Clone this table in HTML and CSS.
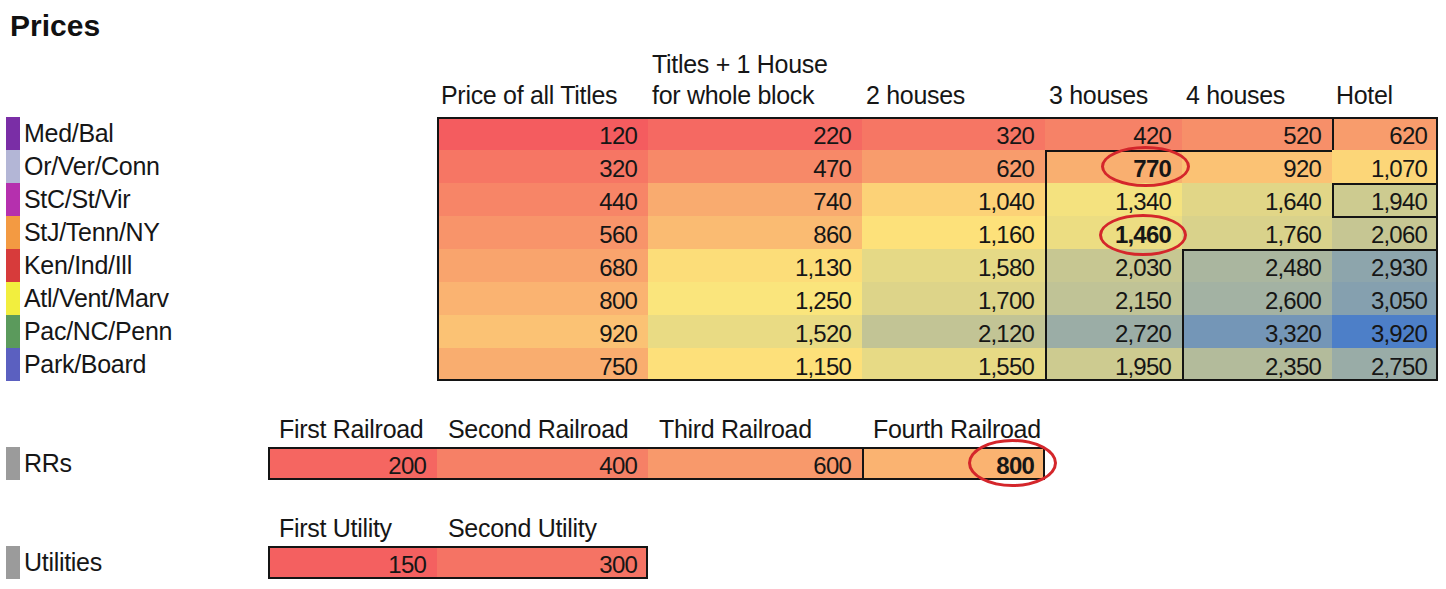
FILE: index.html
```html
<!DOCTYPE html>
<html lang="en">
<head>
<meta charset="utf-8">
<title>Prices</title>
<link rel="stylesheet" href="styles.css">
</head>
<body>
<div class="sheet">
  <h1 class="title">Prices</h1>

  <section class="section">
    <div class="side side-main">
      <ul class="labels">
        <li class="label"><span class="swatch sw-med"></span>Med/Bal</li>
        <li class="label"><span class="swatch sw-or"></span>Or/Ver/Conn</li>
        <li class="label"><span class="swatch sw-stc"></span>StC/St/Vir</li>
        <li class="label"><span class="swatch sw-stj"></span>StJ/Tenn/NY</li>
        <li class="label"><span class="swatch sw-ken"></span>Ken/Ind/Ill</li>
        <li class="label"><span class="swatch sw-atl"></span>Atl/Vent/Marv</li>
        <li class="label"><span class="swatch sw-pac"></span>Pac/NC/Penn</li>
        <li class="label"><span class="swatch sw-park"></span>Park/Board</li>
      </ul>
    </div>
    <div class="body">
      <div class="heads heads-main cols-main">
        <div class="h">Price of all Titles</div>
        <div class="h"><span>Titles + 1 House</span><span>for whole block</span></div>
        <div class="h">2 houses</div>
        <div class="h">3 houses</div>
        <div class="h">4 houses</div>
        <div class="h">Hotel</div>
      </div>
      <div class="grid cols-main">
        <div class="c lo" style="--p:0%">120</div>
        <div class="c lo" style="--p:9.2%">220</div>
        <div class="c lo" style="--p:18.4%">320</div>
        <div class="c lo" style="--p:27.6%">420</div>
        <div class="c lo" style="--p:36.9%">520</div>
        <div class="c lo l" style="--p:46.1%">620</div>

        <div class="c lo" style="--p:18.4%">320</div>
        <div class="c lo" style="--p:32.3%">470</div>
        <div class="c lo" style="--p:46.1%">620</div>
        <div class="c lo t l strong mark" style="--p:59.9%">770<span class="ring ring-770"></span></div>
        <div class="c lo t" style="--p:73.7%">920</div>
        <div class="c lo" style="--p:87.6%">1,070</div>

        <div class="c lo" style="--p:29.5%">440</div>
        <div class="c lo" style="--p:57.1%">740</div>
        <div class="c lo" style="--p:84.8%">1,040</div>
        <div class="c hi l" style="--p:5%">1,340</div>
        <div class="c hi" style="--p:16%">1,640</div>
        <div class="c hi t l" style="--p:27.1%">1,940</div>

        <div class="c lo" style="--p:40.6%">560</div>
        <div class="c lo" style="--p:68.2%">860</div>
        <div class="c lo" style="--p:95.9%">1,160</div>
        <div class="c hi l strong mark" style="--p:9.4%">1,460<span class="ring ring-1460"></span></div>
        <div class="c hi" style="--p:20.4%">1,760</div>
        <div class="c hi t" style="--p:31.5%">2,060</div>

        <div class="c lo" style="--p:51.6%">680</div>
        <div class="c lo" style="--p:93.1%">1,130</div>
        <div class="c hi" style="--p:13.8%">1,580</div>
        <div class="c hi l" style="--p:30.4%">2,030</div>
        <div class="c hi t l" style="--p:47%">2,480</div>
        <div class="c hi t" style="--p:63.5%">2,930</div>

        <div class="c lo" style="--p:62.7%">800</div>
        <div class="c hi" style="--p:1.7%">1,250</div>
        <div class="c hi" style="--p:18.2%">1,700</div>
        <div class="c hi l" style="--p:34.8%">2,150</div>
        <div class="c hi l" style="--p:51.4%">2,600</div>
        <div class="c hi" style="--p:68%">3,050</div>

        <div class="c lo" style="--p:73.7%">920</div>
        <div class="c hi" style="--p:11.6%">1,520</div>
        <div class="c hi" style="--p:33.7%">2,120</div>
        <div class="c hi l" style="--p:55.8%">2,720</div>
        <div class="c hi l" style="--p:77.9%">3,320</div>
        <div class="c hi" style="--p:100%">3,920</div>

        <div class="c lo" style="--p:58.1%">750</div>
        <div class="c lo" style="--p:94.9%">1,150</div>
        <div class="c hi" style="--p:12.7%">1,550</div>
        <div class="c hi l" style="--p:27.4%">1,950</div>
        <div class="c hi l" style="--p:42.2%">2,350</div>
        <div class="c hi" style="--p:56.9%">2,750</div>
      </div>
    </div>
  </section>

  <section class="section section-gap">
    <div class="side side-minor">
      <ul class="labels">
        <li class="label"><span class="swatch sw-gray"></span>RRs</li>
      </ul>
    </div>
    <div class="body">
      <div class="heads heads-minor cols-rr">
        <div class="h">First Railroad</div>
        <div class="h">Second Railroad</div>
        <div class="h">Third Railroad</div>
        <div class="h">Fourth Railroad</div>
      </div>
      <div class="grid cols-rr">
        <div class="c lo" style="--p:7.4%">200</div>
        <div class="c lo" style="--p:25.8%">400</div>
        <div class="c lo" style="--p:44.2%">600</div>
        <div class="c lo l strong mark" style="--p:62.7%">800<span class="ring ring-800"></span></div>
      </div>
    </div>
  </section>

  <section class="section section-gap">
    <div class="side side-minor">
      <ul class="labels">
        <li class="label"><span class="swatch sw-gray"></span>Utilities</li>
      </ul>
    </div>
    <div class="body">
      <div class="heads heads-minor cols-ut">
        <div class="h">First Utility</div>
        <div class="h">Second Utility</div>
      </div>
      <div class="grid cols-ut">
        <div class="c lo" style="--p:2.8%">150</div>
        <div class="c lo" style="--p:16.6%">300</div>
      </div>
    </div>
  </section>
</div>
</body>
</html>
```

FILE: styles.css
```css
:root {
  --ink: #161616;
  --line: #141414;
  --red: #f45c5f;
  --yel: #fde77b;
  --blu: #4d7fc8;
}

* {
  box-sizing: border-box;
}

html,
body {
  margin: 0;
  padding: 0;
  background: #ffffff;
}

body {
  font-family: "Liberation Sans", Arial, sans-serif;
  color: var(--ink);
  width: 1446px;
  height: 589px;
  overflow: hidden;
}

.title {
  margin: 0;
  height: 51px;
  padding-left: 10px;
  font-size: 30px;
  line-height: 51px;
  font-weight: 700;
  color: #111111;
}

.section {
  display: flex;
}

.section-gap {
  margin-top: 33px;
}

.side {
  flex: none;
}

.side-main {
  width: 437px;
  padding-top: 66px;
}

.side-minor {
  width: 268px;
  padding-top: 33px;
}

.labels {
  list-style: none;
  margin: 0;
  padding: 0;
}

.label {
  display: flex;
  height: 33px;
  font-size: 25px;
  letter-spacing: -0.3px;
  line-height: 33px;
  white-space: nowrap;
}

.swatch {
  flex: none;
  width: 14px;
  margin-left: 6px;
  margin-right: 4px;
}

.sw-med { background: #7a2ea6; }
.sw-or { background: #b3b6d6; }
.sw-stc { background: #b530ae; }
.sw-stj { background: #f39a42; }
.sw-ken { background: #d73b3b; }
.sw-atl { background: #f2ee3e; }
.sw-pac { background: #5b9a5c; }
.sw-park { background: #5b60c0; }
.sw-gray { background: #9b9b9b; }

.body {
  flex: none;
}

.cols-main {
  display: grid;
  width: 1001px;
  grid-template-columns: 211px 214px 183px 137px 150px 106px;
}

.cols-rr {
  display: grid;
  width: 777px;
  grid-template-columns: 169px 211px 214px 183px;
}

.cols-ut {
  display: grid;
  width: 380px;
  grid-template-columns: 169px 211px;
}

.h {
  font-size: 25px;
  letter-spacing: -0.3px;
  white-space: nowrap;
}

.heads-main .h {
  height: 66px;
  display: flex;
  flex-direction: column;
  justify-content: flex-end;
  padding: 0 0 6px 4px;
  line-height: 31px;
}

.heads-minor .h {
  height: 33px;
  padding-left: 11px;
  line-height: 30px;
}

.grid {
  position: relative;
  grid-auto-rows: 33px;
}

.grid::after {
  content: "";
  position: absolute;
  inset: 0;
  border: 2px solid var(--line);
  pointer-events: none;
}

.c {
  font-size: 24px;
  letter-spacing: -0.8px;
  line-height: 33px;
  padding: 1.5px 11px 0 0;
  text-align: right;
  white-space: nowrap;
  box-shadow: var(--t, 0 0 transparent), var(--l, 0 0 transparent);
}

.lo {
  background: color-mix(in srgb, var(--yel) var(--p), var(--red));
}

.hi {
  background: color-mix(in srgb, var(--blu) var(--p), var(--yel));
}

.t {
  --t: inset 0 2px var(--line);
}

.l {
  --l: inset 2px 0 var(--line);
}

.strong {
  font-weight: 700;
}

.mark {
  position: relative;
}

.ring {
  position: absolute;
  z-index: 1;
  border: 3px solid #d4262b;
  border-radius: 50%;
  pointer-events: none;
}

.ring-770 {
  left: 56px;
  top: -4px;
  width: 89px;
  height: 41px;
}

.ring-1460 {
  left: 54px;
  top: -2px;
  width: 88px;
  height: 42px;
}

.ring-800 {
  left: 106px;
  top: -8px;
  width: 89px;
  height: 48px;
}
```
